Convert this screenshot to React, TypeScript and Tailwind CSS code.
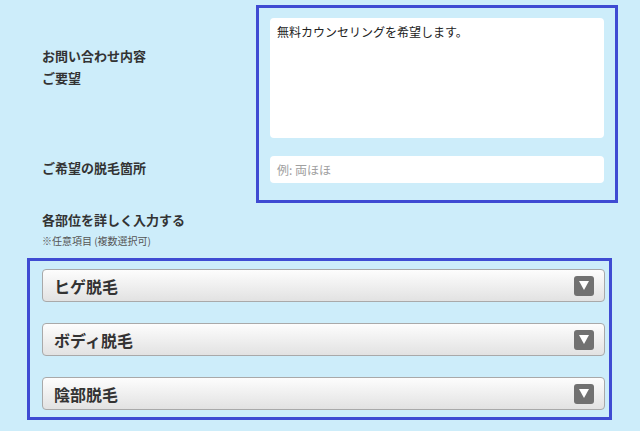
import React from "react";

const font = { fontFamily: '"Noto Sans CJK JP", "Noto Sans", sans-serif' };

function Select({ label }: { label: string }) {
  return (
    <div className="flex h-[33px] items-center justify-between rounded-[4px] border border-[#a9a9a9] bg-gradient-to-b from-[#fdfdfd] to-[#e2e2e2] pl-[11px] pr-[10px]">
      <span className="text-[16px] font-bold leading-none text-[#333]">{label}</span>
      <span className="flex h-[20px] w-[20px] items-center justify-center rounded-[3px] bg-[#717171]">
        <svg width="10" height="9" viewBox="0 0 10 9">
          <polygon points="0,0 10,0 5,9" fill="#fff" />
        </svg>
      </span>
    </div>
  );
}

export default function App() {
  return (
    <div className="h-[431px] w-[640px] overflow-hidden bg-[#cdedfa]" style={font}>
      <div className="flex pl-[42px] pt-[5px]">
        <div className="w-[214px] text-[13px] font-bold leading-[22px] text-[#333]">
          <div className="pt-[40px]">お問い合わせ内容</div>
          <div>ご要望</div>
          <div className="pt-[68px]">ご希望の脱毛箇所</div>
        </div>
        <div className="flex h-[198px] w-[362px] flex-col border-[3px] border-[#3f4bd2] pl-[11px] pr-[11px] pt-[10px]">
          <div className="h-[120px] rounded-[4px] bg-white px-[7px] pt-[5px] text-[12px] leading-[18px] text-[#222]">
            無料カウンセリングを希望します。
          </div>
          <div className="mt-[18px] flex h-[27px] items-center rounded-[4px] bg-white px-[7px] text-[12px] text-[#a0a0a0]">
            例: 両ほほ
          </div>
        </div>
      </div>
      <div className="pl-[42px] pt-[6px]">
        <div className="text-[13px] font-bold leading-[22px] text-[#333]">各部位を詳しく入力する</div>
        <div className="mt-[3px] text-[10px] leading-[14px] text-[#555]">※任意項目 (複数選択可)</div>
      </div>
      <div className="ml-[27px] mt-[10px] flex w-[585px] flex-col gap-[21px] border-[3px] border-[#3f4bd2] pb-[7px] pl-[12px] pr-[4px] pt-[8px]">
        <Select label="ヒゲ脱毛" />
        <Select label="ボディ脱毛" />
        <Select label="陰部脱毛" />
      </div>
    </div>
  );
}
